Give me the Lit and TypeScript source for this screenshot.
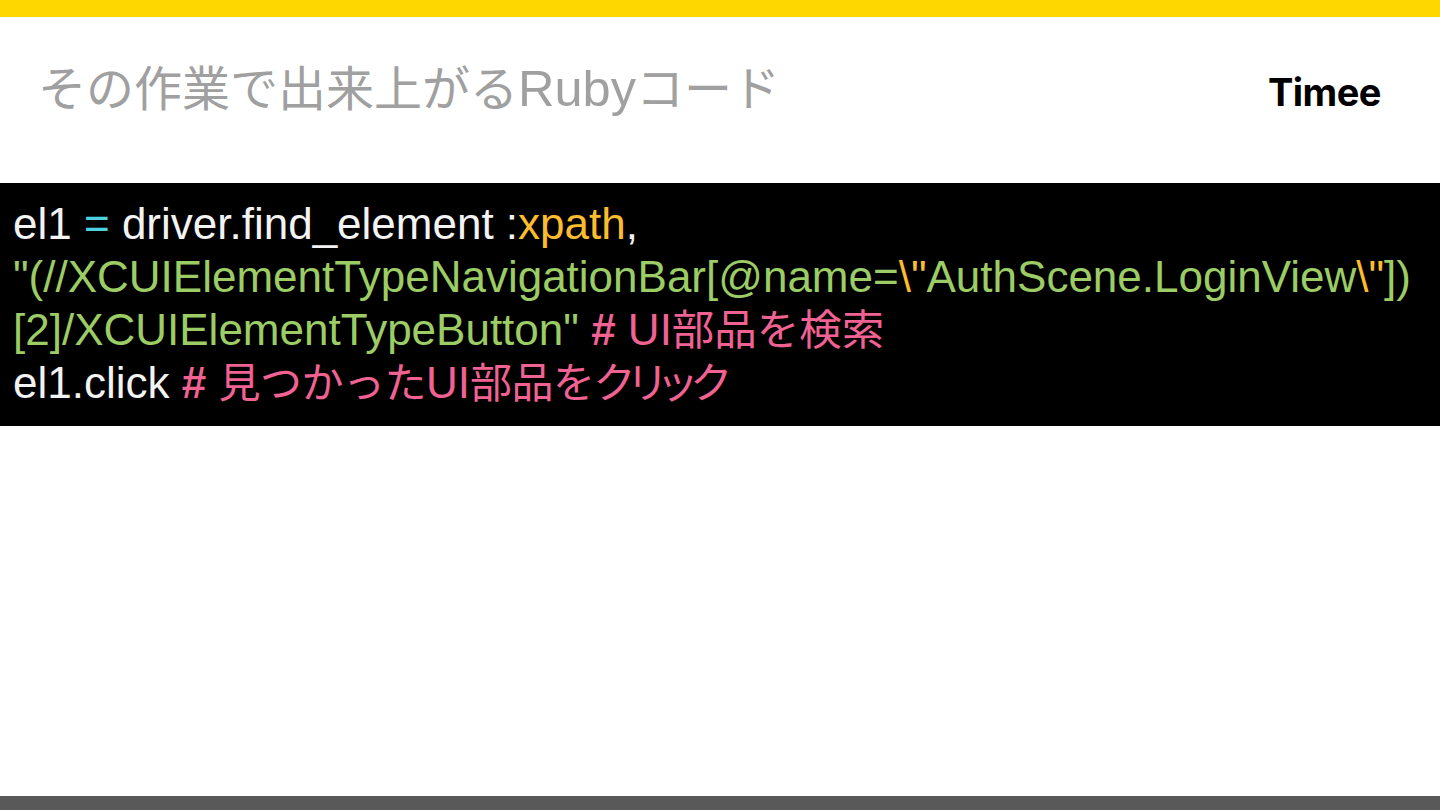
import { LitElement, html, css } from "lit";
import { customElement } from "lit/decorators.js";

@customElement("app-root")
export class AppRoot extends LitElement {
  static styles = css`
    :host { display: block; }
    .page { width: 1440px; height: 810px; display: flex; flex-direction: column; background: #fff; overflow: hidden;
      font-family: "Liberation Sans", "Noto Sans CJK JP", sans-serif; }
    .top { height: 17px; background: #ffd700; flex: none; }
    .header { height: 166px; flex: none; display: flex; justify-content: space-between; align-items: flex-start; padding: 0 59px 0 38px; box-sizing: border-box; }
    .title { margin: 42px 0 0; font-size: 48px; line-height: 60px; font-weight: 400; color: #a0a0a0; white-space: nowrap; }
    .title .latin { font-size: 50.5px; }
    .logo { margin-top: 52px; font-family: Inter, sans-serif; font-weight: 700; font-size: 38px; line-height: 46px; color: #000; letter-spacing: -0.5px; }
    .code { height: 243px; flex: none; background: #000; box-sizing: border-box; padding: 14px 13px 0; font-size: 44px; line-height: 53px; color: #f3f3f3; }
    .line { white-space: nowrap; height: 53px; }
    .spacer { flex: 1; }
    .foot { height: 14px; flex: none; background: #595959; }
    .cyan { color: #4dd0e1; }
    .orange { color: #fbbc2d; }
    .green { color: #9ccc65; }
    .pink { color: #f06292; }
    .hash { font-weight: 700; }
    .ja { font-size: 42.5px; }
    .ja-tight { font-size: 42px; letter-spacing: -0.5px; }
    .kana { font-size: 42.5px; font-feature-settings: "palt"; letter-spacing: -3.2px; }
  `;

  render() {
    return html`<div class="page">
      <div class="top"></div>
      <header class="header">
        <h1 class="title">その作業で出来上がる<span class="latin">Ruby</span>コード</h1>
        <div class="logo">Timee</div>
      </header>
      <section class="code">
        <div class="line">el1 <span class="cyan">=</span> driver.find_element :<span class="orange">xpath</span>,</div>
        <div class="line"><span class="green">"(//XCUIElementTypeNavigationBar[@name=</span><span class="orange">\\"</span><span class="green">AuthScene.LoginView</span><span class="orange">\\"</span><span class="green">])</span></div>
        <div class="line"><span class="green">[2]/XCUIElementTypeButton"</span> <span class="pink"><span class="hash">#</span> UI<span class="ja">部品を検索</span></span></div>
        <div class="line">el1.click <span class="pink"><span class="hash">#</span> <span class="ja-tight">見つかった</span>UI<span class="ja-tight">部品を</span><span class="kana">クリック</span></span></div>
      </section>
      <div class="spacer"></div>
      <div class="foot"></div>
    </div>`;
  }
}
